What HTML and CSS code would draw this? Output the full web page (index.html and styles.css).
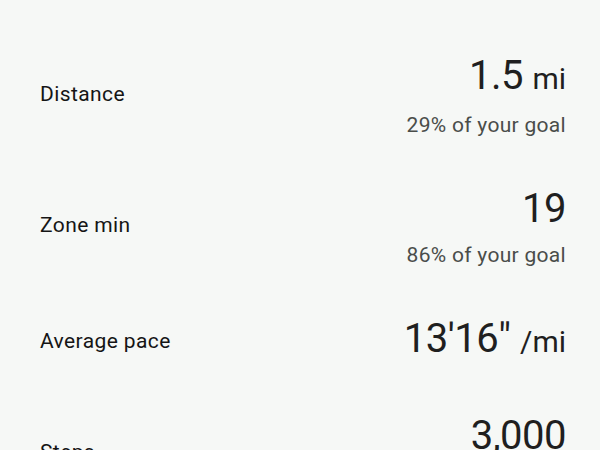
FILE: index.html
```html
<!DOCTYPE html>
<html>
  <head>
    <meta charset="utf-8">
    <title>Workout stats</title>
    <link rel="stylesheet" href="styles.css">
  </head>
  <body>
    <div class="stats">
      <div class="stat-row">
        <p class="stat-label">Distance</p>
        <div class="stat-value">
          <p class="stat-number">1.5 <span class="stat-unit">mi</span></p>
          <p class="stat-goal">29% of your goal</p>
        </div>
      </div>
      <div class="stat-row">
        <p class="stat-label">Zone min</p>
        <div class="stat-value">
          <p class="stat-number">19</p>
          <p class="stat-goal">86% of your goal</p>
        </div>
      </div>
      <div class="stat-row single">
        <p class="stat-label">Average pace</p>
        <div class="stat-value">
          <p class="stat-number">13'16" <span class="stat-unit">/mi</span></p>
        </div>
      </div>
      <div class="stat-row">
        <p class="stat-label">Steps</p>
        <div class="stat-value">
          <p class="stat-number">3,000</p>
          <p class="stat-goal">30% of your goal</p>
        </div>
      </div>
    </div>
  </body>
</html>
```

FILE: styles.css
```css
body {
  margin: 0;
  background-color: #f6f8f6;
  font-family: Roboto, "Liberation Sans", sans-serif;
  color: #1f1f1f;
  overflow: hidden;
}

p {
  margin: 0;
}

.stats {
  padding: 29px 34px 0 40px;
  display: flex;
  flex-direction: column;
}

.stat-row {
  display: flex;
  justify-content: space-between;
  align-items: center;
  padding: 23px 0;
}

.stat-label {
  font-size: 21px;
  font-weight: 400;
  letter-spacing: 0.4px;
  color: #151515;
  margin-bottom: 4px;
}

.stat-row.single .stat-label {
  margin-bottom: 0;
}

.stat-value {
  text-align: right;
}

.stat-number {
  font-size: 40px;
  line-height: 48px;
  font-weight: 400;
  letter-spacing: -0.5px;
}

.stat-unit {
  font-size: 30px;
  letter-spacing: 0;
}

.stat-goal {
  margin-top: 8px;
  font-size: 21px;
  line-height: 28px;
  letter-spacing: 0.3px;
  color: #4a4d4a;
}
```
